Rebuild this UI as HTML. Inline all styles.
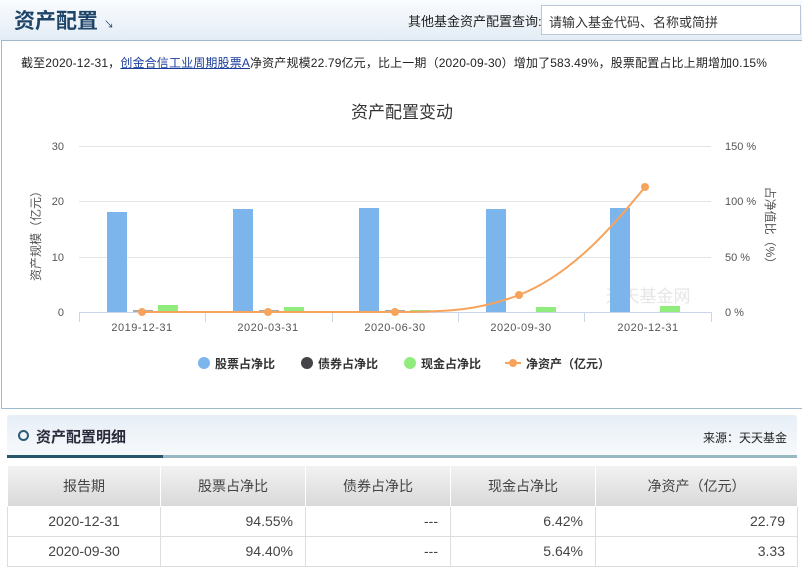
<!DOCTYPE html>
<html><head><meta charset="utf-8"><style>
*{margin:0;padding:0;box-sizing:border-box}
body{width:802px;height:565px;overflow:hidden;background:#fff;font-family:"Liberation Sans","Noto Sans CJK SC",sans-serif;color:#333;position:relative}
.hdr{position:absolute;left:0;top:0;width:802px;height:40px;background:linear-gradient(#fafcfe,#e3ecf5)}
.ttl{position:absolute;left:14px;top:5px;font-size:21px;font-weight:bold;color:#1e4468}
.ttl small{font-size:10px;color:#1e4468;margin-left:6px;font-weight:normal}
.q{position:absolute;left:408px;top:11px;font-size:13px;color:#222}
.inp{position:absolute;left:541px;top:5px;width:260px;height:30px;border:1px solid #b8c8d6;background:#fff;font-size:13px;color:#333;padding:6px 0 0 7px}
.box{position:absolute;left:1px;top:40px;width:802px;height:369px;border:1px solid #9fb9cc;border-right:none}
.info{position:absolute;left:21px;top:54px;font-size:12px;color:#222;letter-spacing:0.15px}
.info a{color:#1a3c9c;text-decoration:underline}
.sh{position:absolute;left:7px;top:415px;width:790px;height:42px;background:linear-gradient(#e6eef6,#f8fafc);border-radius:3px 3px 0 0}
.sh .l{position:absolute;left:0;top:40px;width:156px;height:3px;background:#27566b}
.sh .r{position:absolute;left:156px;top:40px;width:634px;height:3px;background:#97b8c2}
.sh .c{position:absolute;left:11px;top:15px;width:11px;height:11px;border:2px solid #2f5c74;border-radius:50%}
.sh .t{position:absolute;left:29px;top:11px;font-size:15px;font-weight:bold;color:#2a2a3a}
.sh .s{position:absolute;right:10px;top:14px;font-size:12px;color:#222}
table{position:absolute;left:7px;top:466px;width:791px;border-collapse:collapse;font-size:14px;color:#444}
th{height:40px;background:linear-gradient(#f2f2f2,#d9d9d9);font-weight:normal;border:1px solid #fff;border-top:none}
td{height:30px;border:1px solid #ddd;padding:0 12px}
td.c{text-align:center}td.r{text-align:right}
</style></head><body>
<div class="hdr"><div class="ttl">资产配置<small>↘</small></div><div class="q">其他基金资产配置查询:</div><div class="inp">请输入基金代码、名称或简拼</div></div>
<div class="box"></div>
<div class="info">截至2020-12-31，<a>创金合信工业周期股票A</a>净资产规模22.79亿元，比上一期（2020-09-30）增加了583.49%，股票配置占比上期增加0.15%</div>
<svg style="position:absolute;left:0;top:0" width="802" height="410" font-family="Liberation Sans,Noto Sans CJK SC,sans-serif">
<text x="402" y="118" font-size="17" fill="#333" text-anchor="middle">资产配置变动</text>
<g stroke="#e4e4e4" stroke-width="1"><line x1="79" y1="146.5" x2="711" y2="146.5"/><line x1="79" y1="201.5" x2="711" y2="201.5"/><line x1="79" y1="257.5" x2="711" y2="257.5"/></g>
<line x1="79" y1="312.5" x2="711" y2="312.5" stroke="#ccd6eb"/>
<g stroke="#ccd6eb"><line x1="79.5" y1="312" x2="79.5" y2="322"/><line x1="205.5" y1="312" x2="205.5" y2="322"/><line x1="332.5" y1="312" x2="332.5" y2="322"/><line x1="458.5" y1="312" x2="458.5" y2="322"/><line x1="584.5" y1="312" x2="584.5" y2="322"/><line x1="711.5" y1="312" x2="711.5" y2="322"/></g>
<g font-size="11" fill="#555" text-anchor="end"><text x="64" y="150">30</text><text x="64" y="205">20</text><text x="64" y="261">10</text><text x="64" y="316">0</text></g>
<g font-size="11" fill="#555"><text x="725" y="150">150 %</text><text x="725" y="205">100 %</text><text x="725" y="261">50 %</text><text x="725" y="316">0 %</text></g>
<text transform="translate(40,233) rotate(-90)" font-size="12" fill="#555" text-anchor="middle">资产规模（亿元）</text>
<text transform="translate(766,228) rotate(90)" font-size="12" fill="#555" text-anchor="middle">占净值比（%）</text>
<g font-size="11" fill="#555" text-anchor="middle" letter-spacing="0.5"><text x="142" y="331">2019-12-31</text><text x="268" y="331">2020-03-31</text><text x="395" y="331">2020-06-30</text><text x="521" y="331">2020-09-30</text><text x="648" y="331">2020-12-31</text></g>
<text x="648" y="302" font-size="17" fill="#e6e6e6" text-anchor="middle">天天基金网</text>
<g fill="#7cb5ec"><rect x="107" y="212" width="20" height="100"/><rect x="233" y="209" width="20" height="103"/><rect x="359" y="208" width="20" height="104"/><rect x="486" y="209" width="20" height="103"/><rect x="610" y="208" width="20" height="104"/></g>
<g fill="#90ed7d"><rect x="158" y="305" width="20" height="7"/><rect x="284" y="307" width="20" height="5"/><rect x="410" y="310" width="20" height="2"/><rect x="536" y="307" width="20" height="5"/><rect x="660" y="306" width="20" height="6"/></g>
<g fill="#aaa"><rect x="133" y="310" width="20" height="2"/><rect x="259" y="310" width="20" height="2"/><rect x="385" y="310" width="20" height="2"/></g>
<path d="M142 312 L268 312 L395 312 C450 312 480 310 519 295 C570 275 610 230 645 187" fill="none" stroke="#f7a35c" stroke-width="2"/>
<g fill="#f7a35c"><circle cx="142" cy="312" r="4"/><circle cx="268" cy="312" r="4"/><circle cx="395" cy="312" r="4"/><circle cx="519" cy="295" r="4"/><circle cx="645" cy="187" r="4"/></g>
<g font-size="12" font-weight="bold" fill="#333">
<circle cx="204" cy="363" r="6" fill="#7cb5ec"/><text x="215" y="368">股票占净比</text>
<circle cx="307" cy="363" r="6" fill="#434348"/><text x="318" y="368">债券占净比</text>
<circle cx="410" cy="363" r="6" fill="#90ed7d"/><text x="421" y="368">现金占净比</text>
<line x1="505" y1="363" x2="521" y2="363" stroke="#f7a35c" stroke-width="2"/><circle cx="513" cy="363" r="4" fill="#f7a35c"/><text x="526" y="368">净资产（亿元）</text>
</g>
</svg>
<div class="sh"><div class="c"></div><div class="t">资产配置明细</div><div class="s">来源：天天基金</div><div class="l"></div><div class="r"></div></div>
<table>
<tr><th style="width:153px">报告期</th><th style="width:145px">股票占净比</th><th style="width:145px">债券占净比</th><th style="width:145px">现金占净比</th><th>净资产（亿元）</th></tr>
<tr><td class="c">2020-12-31</td><td class="r">94.55%</td><td class="r">---</td><td class="r">6.42%</td><td class="r">22.79</td></tr>
<tr><td class="c">2020-09-30</td><td class="r">94.40%</td><td class="r">---</td><td class="r">5.64%</td><td class="r">3.33</td></tr>
</table>
</body></html>
